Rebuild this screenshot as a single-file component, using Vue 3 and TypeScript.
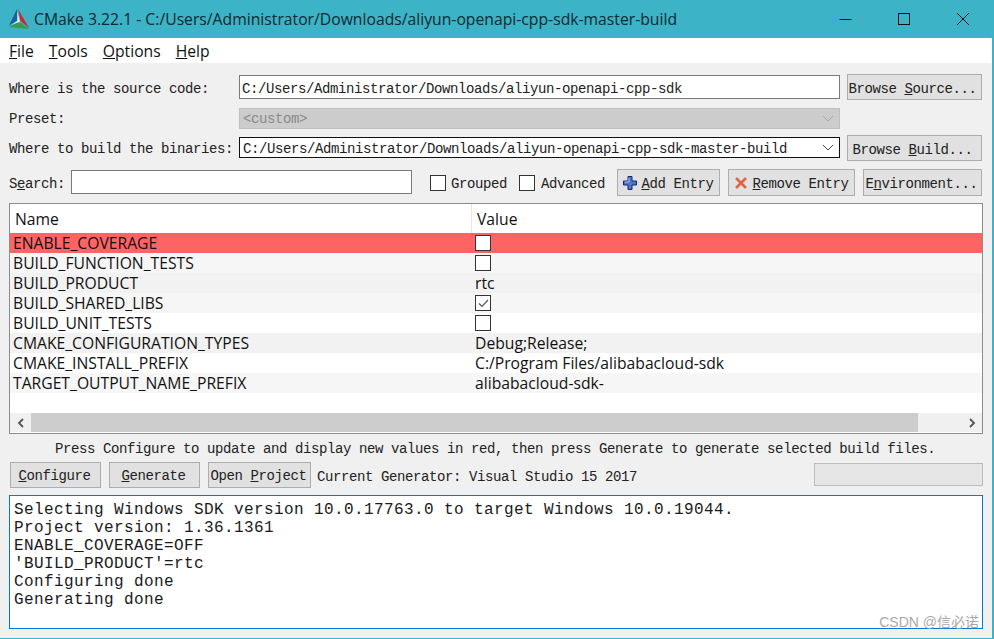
<script setup lang="ts">
interface Entry { name: string; value?: string; check?: boolean; tone: string }
const entries: Entry[] = [
  { name: 'ENABLE_COVERAGE', check: false, tone: 'red' },
  { name: 'BUILD_FUNCTION_TESTS', check: false, tone: 'light' },
  { name: 'BUILD_PRODUCT', value: 'rtc', tone: 'mid' },
  { name: 'BUILD_SHARED_LIBS', check: true, tone: 'light' },
  { name: 'BUILD_UNIT_TESTS', check: false, tone: 'white' },
  { name: 'CMAKE_CONFIGURATION_TYPES', value: 'Debug;Release;', tone: 'mid' },
  { name: 'CMAKE_INSTALL_PREFIX', value: 'C:/Program Files/alibabacloud-sdk', tone: 'white' },
  { name: 'TARGET_OUTPUT_NAME_PREFIX', value: 'alibabacloud-sdk-', tone: 'light' }
]
const logLines = [
  'Selecting Windows SDK version 10.0.17763.0 to target Windows 10.0.19044.',
  'Project version: 1.36.1361',
  'ENABLE_COVERAGE=OFF',
  "'BUILD_PRODUCT'=rtc",
  'Configuring done',
  'Generating done'
]
</script>

<template>
  <div class="window">
    <header class="titlebar">
      <svg class="logo" width="20" height="20" viewBox="0 0 20 20">
        <path d="M8 0 L0 16.5 L8 11.5 Z" fill="#1c5f9e" />
        <path d="M9 0 L20 19 L11.5 12 Z" fill="#d3252c" />
        <path d="M0 18 L20 20 L12 14 L7 14 Z" fill="#3a9c4a" />
        <path d="M8.4 2.5 L11 12.5 L2.5 16 L8.4 12 Z" fill="#e4eef5" />
      </svg>
      <span class="title">CMake 3.22.1 - C:/Users/Administrator/Downloads/aliyun-openapi-cpp-sdk-master-build</span>
      <div class="win-controls">
        <svg width="14" height="14" viewBox="0 0 14 14"><path d="M1.5 7.5H13.5" stroke="#111" fill="none" /></svg>
        <svg width="14" height="14" viewBox="0 0 14 14"><rect x="1.5" y="1.5" width="11" height="11" stroke="#111" fill="none" /></svg>
        <svg width="14" height="14" viewBox="0 0 14 14"><path d="M1 1L13 13M13 1L1 13" stroke="#111" fill="none" /></svg>
      </div>
    </header>

    <nav class="menubar">
      <span><u>F</u>ile</span><span><u>T</u>ools</span><span><u>O</u>ptions</span><span><u>H</u>elp</span>
    </nav>

    <main class="content">
      <div class="row row-source">
        <span class="label shifted">Where is the source code:</span>
        <div class="field field-source"><span class="shifted">C:/Users/Administrator/Downloads/aliyun-openapi-cpp-sdk</span></div>
        <button class="btn btn-browse"><span class="shifted">Browse <u>S</u>ource...</span></button>
      </div>
      <div class="row row-preset">
        <span class="label shifted-small">Preset:</span>
        <div class="field field-preset">
          <span class="shifted-small">&lt;custom&gt;</span>
          <svg width="12" height="7" viewBox="0 0 12 7"><path d="M1 1L6 6L11 1" stroke="#aaa" fill="none" /></svg>
        </div>
      </div>
      <div class="row row-build">
        <span class="label shifted-small">Where to build the binaries:</span>
        <div class="field field-build">
          <span class="shifted-small">C:/Users/Administrator/Downloads/aliyun-openapi-cpp-sdk-master-build</span>
          <svg width="12" height="7" viewBox="0 0 12 7"><path d="M1 1L6 6L11 1" stroke="#444" fill="none" /></svg>
        </div>
        <button class="btn btn-browse"><span class="shifted-large">Browse <u>B</u>uild...</span></button>
      </div>
      <div class="row row-search">
        <span class="search-label shifted-small">S<u>e</u>arch:</span>
        <div class="search-input"></div>
        <span class="box box-grouped"></span><span class="box-text grouped shifted-small">Grouped</span>
        <span class="box box-advanced"></span><span class="box-text advanced shifted-small">Advanced</span>
        <button class="btn btn-add">
          <svg width="14" height="14" viewBox="0 0 14 14">
            <path d="M5 .5H9V5H13.5V9H9V13.5H5V9H.5V5H5Z" fill="#4a78c8" stroke="#14246e" />
            <path d="M6 2V6H2" stroke="#a9c4f0" fill="none" />
          </svg>
          <span class="shifted-small"><u>A</u>dd Entry</span>
        </button>
        <button class="btn btn-remove">
          <svg width="14" height="14" viewBox="0 0 14 14">
            <path d="M1 3L3 1L7 5L11 1L13 3L9 7L13 11L11 13L7 9L3 13L1 11L5 7Z" fill="#e8613c" stroke="#c9b9ad" />
          </svg>
          <span class="shifted-small"><u>R</u>emove Entry</span>
        </button>
        <button class="btn btn-env text-only"><span class="shifted-small">E<u>n</u>vironment...</span></button>
      </div>

      <section class="table">
        <div class="thead">
          <div class="th name-col">Name</div>
          <div class="th">Value</div>
        </div>
        <div class="tbody">
          <div v-for="e in entries" :key="e.name" class="tr" :class="e.tone">
            <div class="td name-col">{{ e.name }}</div>
            <div class="td value-col">
              <span v-if="e.check !== undefined" class="cell-box">
                <svg v-if="e.check" width="13" height="13" viewBox="0 0 13 13"><path d="M2 6.5L5 9.5L11 3" stroke="#555" stroke-width="1.2" fill="none" /></svg>
              </span>
              <template v-else>{{ e.value }}</template>
            </div>
          </div>
        </div>
        <div class="hscroll">
          <div class="arrow"><svg width="8" height="10" viewBox="0 0 8 10"><path d="M6 1L2 5L6 9" stroke="#555" stroke-width="1.8" fill="none" /></svg></div>
          <div class="thumb"></div>
          <div class="arrow arrow-right"><svg width="8" height="10" viewBox="0 0 8 10"><path d="M2 1L6 5L2 9" stroke="#555" stroke-width="1.8" fill="none" /></svg></div>
        </div>
      </section>

      <p class="hint">Press Configure to update and display new values in red, then press Generate to generate selected build files.</p>

      <div class="row row-actions">
        <button class="btn btn-action text-only"><span class="shifted-small"><u>C</u>onfigure</span></button>
        <button class="btn btn-action text-only"><span class="shifted-small"><u>G</u>enerate</span></button>
        <button class="btn btn-open text-only"><span class="shifted-small">Open <u>P</u>roject</span></button>
        <span class="generator shifted-large">Current Generator: Visual Studio 15 2017</span>
        <div class="progress"></div>
      </div>

      <section class="log">
        <div v-for="line in logLines" :key="line" class="log-line">{{ line }}</div>
      </section>
    </main>

    <span class="watermark">CSDN @信必诺</span>
  </div>
</template>

<style>
html, body { margin: 0; background: #3cb3c6; overflow: hidden; }
</style>

<style scoped>
.window {
  position: relative;
  width: 992px;
  height: 638px;
  display: flex;
  flex-direction: column;
  background: #f0f0f0;
  overflow: hidden;
}
.titlebar {
  height: 38px;
  flex: none;
  display: flex;
  align-items: center;
  background: #3cb3c6;
  padding-left: 9px;
  box-sizing: border-box;
}
.logo { flex: none; }
.title {
  margin-left: 5px;
  font: 15.72px "Open Sans", "Noto Sans", sans-serif;
  color: #0d2a30;
  white-space: nowrap;
}
.win-controls {
  margin-left: auto;
  display: flex;
  gap: 45px;
  margin-right: 22px;
}
.win-controls svg { display: block; }
.menubar {
  height: 25px;
  flex: none;
  display: flex;
  gap: 15px;
  align-items: center;
  padding-left: 9px;
  background: #fff;
  font: 15.7px "Open Sans", "Noto Sans", sans-serif;
  color: #111;
}
.content {
  flex: 1;
  display: flex;
  flex-direction: column;
  padding: 0 9px;
  font: 14px/16px "Liberation Mono", monospace;
  letter-spacing: -0.4px;
  color: #222;
  min-height: 0;
}
.row { display: flex; align-items: center; }
.label { width: 230px; flex: none; white-space: pre; }
.shifted { padding-top: 3px; }
.shifted-small { padding-top: 2px; }
.shifted-large { padding-top: 4px; }
.row-source { margin-top: 11px; height: 26px; }
.row-preset { margin-top: 7px; height: 22px; }
.row-build { margin-top: 6px; height: 26px; }
.row-search { margin-top: 8px; height: 27px; }
.field {
  box-sizing: border-box;
  width: 601px;
  flex: none;
  display: flex;
  align-items: center;
  justify-content: space-between;
  padding-left: 2px;
  padding-right: 2px;
}
.field-source { height: 24px; background: #fff; border: 1px solid #7a7a7a; }
.field-preset { height: 21px; background: #ccc; border: 1px solid #bfbfbf; color: #8a8a8a; padding: 0 5px 0 3px; }
.field-build { height: 21px; background: #fff; border: 1px solid #111; padding: 0 5px 0 3px; align-self: flex-start; margin-top: 2px; }
.btn {
  box-sizing: border-box;
  background: #e1e1e1;
  border: 1px solid #adadad;
  font: inherit;
  letter-spacing: inherit;
  color: #222;
  padding: 0;
  white-space: nowrap;
  display: inline-flex;
  align-items: center;
  justify-content: center;
}
.btn span { white-space: pre; }
.text-only { padding-right: 2px; }
.btn-browse { width: 135px; height: 26px; margin-left: 7px; flex: none; padding-right: 4px; }
.search-label { width: 62px; flex: none; }
.search-input { box-sizing: border-box; width: 341px; height: 24px; background: #fff; border: 1px solid #7a7a7a; flex: none; align-self: flex-start; margin-top: 1px; }
.box { box-sizing: border-box; width: 16px; height: 16px; background: #fff; border: 1px solid #333; flex: none; }
.box-grouped { margin-left: 18px; }
.box-advanced { margin-left: 11px; }
.box-text { flex: none; }
.grouped { margin-left: 5px; width: 57px; }
.advanced { margin-left: 6px; width: 64px; }
.btn-add { margin-left: 12px; width: 103px; height: 27px; gap: 4px; }
.btn-remove { margin-left: 8px; width: 127px; height: 27px; gap: 4px; }
.btn-env { margin-left: 8px; width: 119px; height: 27px; }
.table {
  box-sizing: border-box;
  margin-top: 7px;
  height: 231px;
  width: 974px;
  background: #fff;
  border: 1px solid #8c8c8c;
  display: flex;
  flex-direction: column;
  font: 15.7px/20px "Open Sans", "Noto Sans", sans-serif;
  letter-spacing: 0;
  color: #111;
  flex: none;
}
.thead { display: flex; height: 29px; flex: none; }
.th { display: flex; align-items: center; padding-left: 5px; }
.th.name-col { border-right: 1px solid #e6e6e6; width: 456px; }
.name-col { flex: none; box-sizing: content-box; }
.tbody { height: 180px; flex: none; }
.tr { display: flex; height: 20px; }
.tr .name-col { padding-left: 3px; width: 458px; }
.td { white-space: nowrap; }
.value-col { padding-left: 4px; display: flex; align-items: center; }
.tr.red { background: #ff6464; }
.tr.light { background: #f6f6f6; }
.tr.mid { background: #f2f2f2; }
.tr.white { background: #fff; }
.cell-box {
  box-sizing: border-box;
  width: 16px;
  height: 16px;
  background: #fff;
  border: 1px solid #333;
  display: flex;
  align-items: center;
  justify-content: center;
}
.hscroll { height: 19px; flex: none; display: flex; background: #f0f0f0; }
.arrow { width: 21px; flex: none; display: flex; align-items: center; justify-content: center; }
.thumb { width: 887px; background: #cdcdcd; flex: none; }
.arrow-right { margin-left: auto; }
.hint { margin: 7px 0 0 46px; height: 16px; white-space: pre; }
.row-actions { margin-top: 5px; height: 26px; padding-left: 1px; }
.btn-action { width: 91px; height: 26px; margin-right: 8px; flex: none; }
.btn-open { width: 103px; height: 26px; flex: none; }
.generator { margin-left: 6px; white-space: pre; }
.progress { box-sizing: border-box; margin-left: auto; width: 169px; height: 23px; background: #e6e6e6; border: 1px solid #bcbcbc; align-self: flex-start; margin-top: 1px; }
.log {
  box-sizing: border-box;
  margin-top: 7px;
  width: 974px;
  height: 134px;
  background: #fff;
  border: 1px solid #0078d7;
  padding: 5px 0 0 4px;
  font: 16px/18px "Liberation Mono", monospace;
  letter-spacing: 0.4px;
  color: #1a1a1a;
}
.log-line { white-space: pre; }
.watermark {
  position: absolute;
  right: 13px;
  bottom: 7px;
  font: 14px "Liberation Sans", "Noto Sans CJK SC", sans-serif;
  color: #9a9a9a;
  opacity: 0.85;
}
</style>
